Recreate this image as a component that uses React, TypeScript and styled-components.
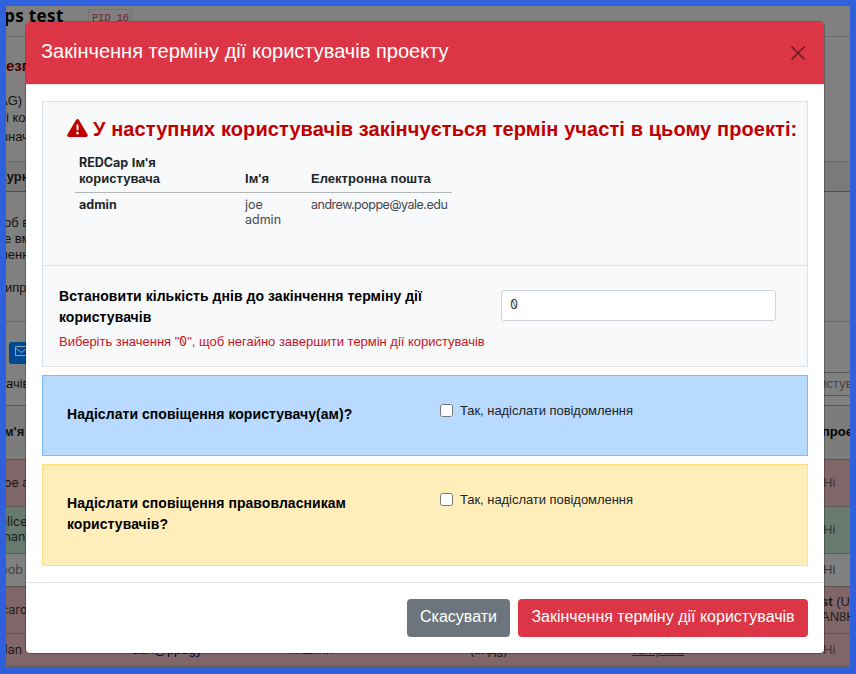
import React from 'react';
import styled, { createGlobalStyle } from 'styled-components';

const GlobalStyle = createGlobalStyle`
  *, *::before, *::after { box-sizing: border-box; }
  body { margin: 0; font-family: "Liberation Sans", Arial, sans-serif; overflow: hidden; }
`;

const Frame = styled.div`
  position: relative;
  width: 856px;
  height: 674px;
  border: 6px solid #3060dc;
  background: #808080;
  overflow: hidden;
`;

/* ---------- dimmed page ---------- */
const Page = styled.div`
  display: flex;
  flex-direction: column;
  width: 844px;
  height: 662px;
  font-size: 13px;
  color: #111;
  white-space: nowrap;
  overflow: hidden;
`;

const ProjectBar = styled.div`
  display: flex;
  align-items: flex-start;
  height: 31px;
  flex: none;
  border-bottom: 1px solid #6b6b6b;
`;

const ProjectName = styled.div`
  width: 82px;
  margin-left: -2px;
  font: 700 17px/20px "Open Sans", sans-serif;
  letter-spacing: 0.4px;
  color: #000;
`;

const Pid = styled.div`
  width: 44px;
  height: 19px;
  margin-top: 3px;
  margin-left: 2px;
  padding-left: 3px;
  border: 1px solid #737373;
  border-radius: 3px;
  font: 11px/16px "Liberation Mono", monospace;
  letter-spacing: -0.5px;
  color: #7a222c;
`;

const PageBlock = styled.div<{ $h: number; $top?: number; $line?: string; $shade?: string }>`
  flex: none;
  height: ${(p) => p.$h}px;
  padding-top: ${(p) => p.$top ?? 0}px;
  border-bottom: ${(p) => (p.$line ? `1px solid ${p.$line}` : '0')};
  background: ${(p) => p.$shade ?? 'transparent'};
  overflow: hidden;
`;

const PageLine = styled.div<{ $h: number; $shift?: number; $strong?: boolean }>`
  height: ${(p) => p.$h}px;
  line-height: ${(p) => p.$h}px;
  margin-left: ${(p) => p.$shift ?? 0}px;
  font-weight: ${(p) => (p.$strong ? 700 : 400)};
`;

const PageHeading = styled.div`
  height: 38px;
  font-size: 15px;
  font-weight: 700;
  line-height: 20px;
  color: #4b0000;
`;

const MailButton = styled.div`
  display: flex;
  width: 60px;
  height: 22px;
  margin-left: 3px;
  padding: 4px 6px;
  border-radius: 3px;
  background: #004991;
`;

const SearchRow = styled.div`
  display: flex;
  justify-content: space-between;
  height: 33px;
  flex: none;
`;

const SearchBox = styled.div`
  width: 130px;
  height: 24px;
  border: 1px solid #5a5a5a;
  padding-left: 68px;
  line-height: 21px;
  margin-right: -10px;
  overflow: hidden;
  color: #444;
`;

const TableRow = styled.div<{ $h: number; $bg: string }>`
  display: grid;
  grid-template-columns: 126px 156px 182px 162px 189px 29px;
  align-items: center;
  height: ${(p) => p.$h}px;
  flex: none;
  padding-bottom: 2px;
  border-top: 1px solid #5b5757;
  background: ${(p) => p.$bg};
`;

const NameCell = styled.div<{ $shift?: number; $dim?: boolean }>`
  margin-left: ${(p) => p.$shift ?? 0}px;
  font-family: Inter, "Liberation Sans", sans-serif;
  font-size: 12.5px;
  line-height: 15px;
  color: ${(p) => (p.$dim ? '#404346' : '#20191b')};
`;

const FlagCell = styled.div<{ $heading?: boolean }>`
  grid-column: 6;
  margin-left: ${(p) => (p.$heading ? 1 : 2)}px;
  font-size: 13px;
  line-height: 15px;
  font-weight: ${(p) => (p.$heading ? 700 : 400)};
  color: ${(p) => (p.$heading ? '#000' : '#35383d')};
`;

const RightsCell = styled.div`
  grid-column: 6;
  margin-left: -6px;
  text-indent: 6px;
  font-size: 13px;
  line-height: 15px;
  color: #20191b;
`;

const MidCell = styled.div<{ $link?: boolean; $navy?: boolean }>`
  line-height: 15px;
  color: ${(p) => (p.$link ? '#0a2a5e' : p.$navy ? '#000042' : '#111')};
  text-decoration: ${(p) => (p.$link ? 'underline' : 'none')};
`;

/* ---------- dialog ---------- */
const Dialog = styled.div`
  position: absolute;
  left: 19px;
  top: 15px;
  width: 800px;
  height: 633px;
  display: flex;
  flex-direction: column;
  background: #fff;
  background-clip: padding-box;
  border: 1px solid rgba(0, 0, 0, 0.25);
  border-radius: 5px;
  overflow: hidden;
`;

const Header = styled.div`
  display: flex;
  justify-content: space-between;
  align-items: center;
  height: 63px;
  flex: none;
  padding: 0 19px 0 15px;
  border-bottom: 1px solid #dee2e6;
  background: #dc3545;
`;

const Title = styled.h5`
  margin: 0 0 5px;
  font-size: 20px;
  font-weight: 400;
  line-height: 30px;
  letter-spacing: 0.01px;
  color: #fff;
`;

const CloseIcon = styled.svg`
  width: 14px;
  height: 14px;
  margin-bottom: 1px;
`;

const Body = styled.div`
  display: flex;
  flex-direction: column;
  gap: 8px;
  height: 498px;
  flex: none;
  padding: 16px;
  border-bottom: 1px solid #dee2e6;
`;

const Card = styled.section`
  height: 266px;
  flex: none;
  border: 1px solid #dee2e6;
  background: #f8f9fb;
`;

const UsersPart = styled.div`
  height: 164px;
  padding: 14px 0 0 24px;
  border-bottom: 1px solid #dee2e6;
`;

const Warning = styled.h4`
  display: flex;
  align-items: center;
  gap: 5px;
  height: 26px;
  margin: 0;
  font-size: 20px;
  line-height: 26px;
  letter-spacing: 0.09px;
  white-space: nowrap;
  color: #c00000;
`;

const WarningIcon = styled.svg`
  width: 21px;
  height: 18px;
  margin-top: -2px;
  flex: none;
`;

const Users = styled.div`
  display: grid;
  grid-template-columns: 166px 66px 145px;
  width: 377px;
  margin: 12px 0 0 8px;
  font-size: 13px;
  color: #212529;
`;

const HeadCell = styled.div`
  display: flex;
  flex-direction: column;
  justify-content: flex-end;
  height: 39px;
  padding: 0 0 5px 4px;
  border-bottom: 1px solid #b4b7ba;
  line-height: 16px;
  font-weight: 700;
  letter-spacing: 0.02px;
  white-space: nowrap;
`;

const Latin = styled.span`
  font-family: Inter, sans-serif;
  font-size: 12.5px;
  letter-spacing: 0;
`;

const UserCell = styled.div<{ $strong?: boolean; $tight?: boolean }>`
  padding: 4px 0 4px 4px;
  line-height: 15px;
  font-family: Inter, sans-serif;
  font-size: 12.5px;
  font-weight: ${(p) => (p.$strong ? 700 : 400)};
  letter-spacing: ${(p) => (p.$tight ? '-0.49px' : '0')};
  color: ${(p) => (p.$strong ? '#212529' : '#45494e')};
`;

const DaysPart = styled.div`
  display: grid;
  grid-template-columns: 442px 275px;
  padding: 20px 0 0 16px;
`;

const Question = styled.div`
  font-size: 14px;
  font-weight: 700;
  line-height: 21px;
  letter-spacing: 0.05px;
  color: #000;
`;

const Hint = styled.div`
  margin-top: 4px;
  font-size: 13px;
  line-height: 20px;
  letter-spacing: -0.02px;
  white-space: nowrap;
  color: #c9151b;
`;

const DaysInput = styled.div`
  display: flex;
  align-items: center;
  height: 31px;
  margin-top: 4px;
  padding: 0 8px 2px;
  border: 1px solid #ced4da;
  border-radius: 3px;
  background: #fff;
  color: #363b40;
`;

/* zero with a backslash stroke */
const Zero = styled.span`
  display: inline-block;
  font: 12.5px/15px Inter, sans-serif;
  font-feature-settings: "zero" 1;
  transform: scaleX(-1);
`;

const Notice = styled.section<{ $h: number; $bg: string; $edge: string }>`
  display: grid;
  grid-template-columns: 373px 1fr;
  height: ${(p) => p.$h}px;
  flex: none;
  padding: 28px 0 0 24px;
  border: 1px solid ${(p) => p.$edge};
  background: ${(p) => p.$bg};
`;

const Option = styled.label`
  display: flex;
  height: 13px;
  align-items: center;
  gap: 7px;
  font-size: 13px;
  letter-spacing: -0.05px;
  color: #212529;
`;

const Box = styled.input`
  width: 13px;
  height: 13px;
  margin: 0;
`;

const Footer = styled.div`
  display: flex;
  justify-content: flex-end;
  gap: 8px;
  padding: 16px 16px 0;
`;

const Button = styled.button<{ $w: number; $bg: string }>`
  width: ${(p) => p.$w}px;
  height: 38px;
  padding: 0 0 3px;
  border: 0;
  border-radius: 4px;
  background: ${(p) => p.$bg};
  color: #fff;
  font: 16px/24px "Liberation Sans", Arial, sans-serif;
  white-space: nowrap;
`;

const pink = '#806668';
const green = '#667a6d';

export default function App() {
  return (
    <>
      <GlobalStyle />
      <Frame>
        <Page>
          <ProjectBar>
            <ProjectName>ps test</ProjectName>
            <Pid>PID 16</Pid>
          </ProjectBar>
          <PageBlock $h={125} $top={19} $line="#6b6b6b">
            <PageHeading>езпека</PageHeading>
            <PageLine $h={14} $shift={-7}>AG)</PageLine>
            <PageLine $h={20}>і кори</PageLine>
            <PageLine $h={18} $shift={-4}>значе</PageLine>
          </PageBlock>
          <PageBlock $h={30} $line="#4c4c4c" $shade="#7a7a7a">
            <PageLine $h={29} $shift={-11} $strong>Журнал</PageLine>
          </PageBlock>
          <PageBlock $h={130} $top={23} $line="#676767">
            <PageLine $h={16} $shift={-2}>об в</PageLine>
            <PageLine $h={16} $shift={-2}>е вм</PageLine>
            <PageLine $h={16} $shift={-5}>ченн</PageLine>
            <PageLine $h={50} $shift={-1}>ипра</PageLine>
          </PageBlock>
          <PageBlock $h={50} $top={20}>
            <MailButton>
              <svg width="16" height="13" viewBox="0 0 16 13" fill="none" stroke="#8da5bd">
                <path d="M.5 .5h12v9H.5zM.5 2l6 4.500 6-4.500" />
              </svg>
            </MailButton>
          </PageBlock>
          <SearchRow>
            <PageLine $h={23}>ачів</PageLine>
            <SearchBox>користувача</SearchBox>
          </SearchRow>
          <TableRow $h={54} $bg="#7c7c7c">
            <PageLine $h={16} $shift={-2} $strong>м'я</PageLine>
            <FlagCell $heading>проекту</FlagCell>
          </TableRow>
          <TableRow $h={47} $bg={pink}>
            <NameCell $shift={-2}>oe ad</NameCell>
            <FlagCell>Ні</FlagCell>
          </TableRow>
          <TableRow $h={47} $bg={green}>
            <NameCell $shift={-6}>alice<br />man</NameCell>
            <FlagCell>Ні</FlagCell>
          </TableRow>
          <TableRow $h={33} $bg="#808080">
            <NameCell $shift={-6} $dim>bob</NameCell>
            <FlagCell>Ні</FlagCell>
          </TableRow>
          <TableRow $h={47} $bg={pink}>
            <NameCell $shift={-5}>carol</NameCell>
            <RightsCell><b>st</b> (U-<div>AN8H</div></RightsCell>
          </TableRow>
          <TableRow $h={33} $bg={pink}>
            <NameCell $shift={-6}>dan</NameCell>
            <MidCell $navy>dan@ррdgy</MidCell>
            <MidCell>пишкни</MidCell>
            <MidCell>(видg)</MidCell>
            <MidCell $link>та права</MidCell>
            <FlagCell>Ні</FlagCell>
          </TableRow>
          <PageBlock $h={2} $shade="#5d625c" />
        </Page>

        <Dialog role="dialog">
          <Header>
            <Title>Закінчення терміну дії користувачів проекту</Title>
            <CloseIcon viewBox="0 0 14 14" stroke="#6e1a22" strokeWidth="1.7" strokeLinecap="round">
              <path d="M1 1l12 12M13 1L1 13" />
            </CloseIcon>
          </Header>
          <Body>
            <Card>
              <UsersPart>
                <Warning>
                  <WarningIcon viewBox="0 0 512 448">
                    <path
                      fill="#c00000"
                      d="M256 0c14 0 27 7.500 34 20l216 368c7 12 7 27 0 40s-20 20-34 20H40c-14 0-27-8-34-20s-7-27 0-40L222 20c7-12 20-20 34-20z"
                    />
                    <path fill="#f8f9fb" d="M256 128c-13 0-24 11-24 24v112c0 13 11 24 24 24s24-11 24-24V152c0-13-11-24-24-24z" />
                    <circle cx="256" cy="352" r="32" fill="#f8f9fb" />
                  </WarningIcon>
                  У наступних користувачів закінчується термін участі в цьому проекті:
                </Warning>
                <Users>
                  <HeadCell>
                    <span><Latin>REDCap</Latin> Ім'я</span>
                    <span>користувача</span>
                  </HeadCell>
                  <HeadCell>Ім'я</HeadCell>
                  <HeadCell>Електронна пошта</HeadCell>
                  <UserCell $strong>admin</UserCell>
                  <UserCell>joe<br />admin</UserCell>
                  <UserCell $tight>andrew.poppe@yale.edu</UserCell>
                </Users>
              </UsersPart>
              <DaysPart>
                <div>
                  <Question>
                    Встановити кількість днів до закінчення терміну дії<br />користувачів
                  </Question>
                  <Hint>
                    Виберіть значення "<Zero>0</Zero>", щоб негайно завершити термін дії користувачів
                  </Hint>
                </div>
                <DaysInput><Zero>0</Zero></DaysInput>
              </DaysPart>
            </Card>
            <Notice $h={81} $bg="#b8daff" $edge="#7abaff">
              <Question>Надіслати сповіщення користувачу(ам)?</Question>
              <Option><Box type="checkbox" />Так, надіслати повідомлення</Option>
            </Notice>
            <Notice $h={102} $bg="#ffeeba" $edge="#ffdf7e">
              <Question>Надіслати сповіщення правовласникам<br />користувачів?</Question>
              <Option><Box type="checkbox" />Так, надіслати повідомлення</Option>
            </Notice>
          </Body>
          <Footer>
            <Button $w={103} $bg="#6c757d">Скасувати</Button>
            <Button $w={290} $bg="#dc3545">Закінчення терміну дії користувачів</Button>
          </Footer>
        </Dialog>
      </Frame>
    </>
  );
}
